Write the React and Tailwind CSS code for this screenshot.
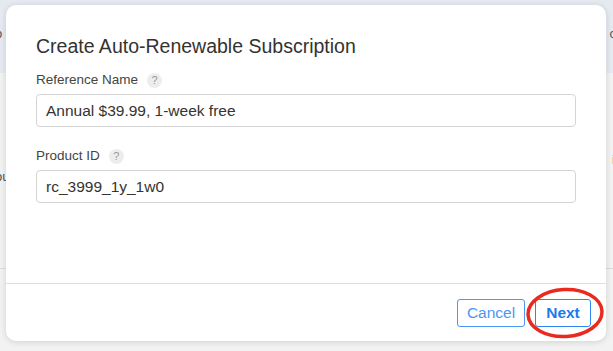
import React from 'react';

// Page behind the dialog (mostly covered)
function BackgroundPage() {
  return (
    <div className="flex h-[351px] w-[613px] flex-col overflow-hidden bg-[#f2f2f2] text-[13px] text-[#555]">
      <div className="flex h-[73px] items-start justify-between bg-[#e5eaf1] pt-[24px]">
        <span className="-ml-[5px]">o</span>
        <span className="-mr-[3px]">c</span>
      </div>
      <div className="flex flex-1 justify-between pt-[78px] leading-[17px]">
        <div className="-ml-[5px] flex flex-col">
          <span>t</span>
          <span>ou</span>
        </div>
        <span className="-mr-[2px]">i</span>
      </div>
      <div className="h-[83px] border-t border-[#dcdcdc] bg-[#f2f2f2]" />
    </div>
  );
}

function HelpBadge() {
  return (
    <span className="ml-[9px] flex h-[15px] w-[15px] items-center justify-center rounded-full bg-[#ededed] text-[11px] leading-none text-[#9a9a9a]">
      ?
    </span>
  );
}

function Field({ label, value }) {
  return (
    <div className="flex flex-col">
      <div className="flex h-[17px] items-center text-[13.5px] text-[#444]">
        {label}
        <HelpBadge />
      </div>
      <div className="mt-[5px] flex h-[33px] items-center rounded-[4px] border border-[#d4d4d4] bg-white px-[9px] text-[15.5px] text-[#333]">
        {value}
      </div>
    </div>
  );
}

export default function App() {
  return (
    <div className="relative h-[351px] w-[613px] overflow-hidden" style={{ fontFamily: '"Liberation Sans", Arial, sans-serif' }}>
      <BackgroundPage />

      <div className="absolute left-[6px] top-[5px] flex h-[336px] w-[600px] flex-col rounded-[10px] bg-white shadow-[0_1px_6px_rgba(0,0,0,0.14)]">
        <div className="flex flex-1 flex-col px-[30px]">
          <h2 className="mt-[31px] text-[19.5px] leading-[20px] text-[#333]">Create Auto-Renewable Subscription</h2>
          <div className="mt-[16px] flex flex-col gap-[21px]">
            <Field label="Reference Name" value="Annual $39.99, 1-week free" />
            <Field label="Product ID" value="rc_3999_1y_1w0" />
          </div>
        </div>

        <div className="flex h-[58px] items-start justify-end gap-[10px] border-t border-[#dedede] pr-[15px] pt-[15px]">
          <button className="h-[28px] w-[68px] rounded-[3px] border border-[#4a97f5] bg-white text-[15.5px] text-[#4a97f5]">
            Cancel
          </button>
          <button className="relative h-[28px] w-[56px] rounded-[3px] border border-[#2d86f3] bg-white text-[15.5px] font-bold text-[#1a7af0]">
            Next
            <svg className="pointer-events-none absolute left-[-10px] top-[-13px]" width="80" height="53" viewBox="0 0 80 53">
              <ellipse cx="39" cy="26" rx="37" ry="23.5" fill="none" stroke="#ea2a1f" strokeWidth="3.5" transform="rotate(-3 39 26)" />
            </svg>
          </button>
        </div>
      </div>
    </div>
  );
}
